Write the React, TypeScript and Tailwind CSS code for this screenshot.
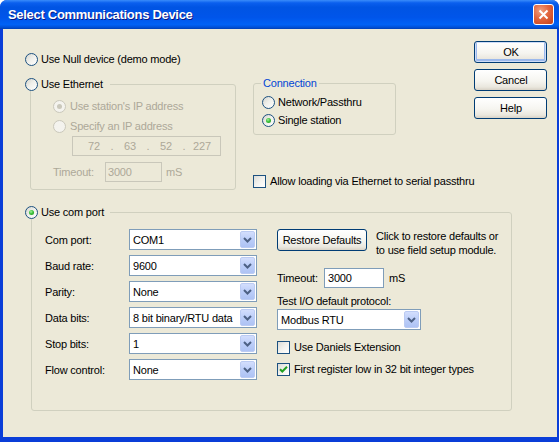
import React from "react";

const Radio = ({ checked = false, disabled = false }: { checked?: boolean; disabled?: boolean }) => (
  <span
    className={`flex h-[13px] w-[13px] shrink-0 items-center justify-center rounded-full border ${
      disabled
        ? "border-[#CAC8BB] bg-[#F4F3EE]"
        : "border-[#1C5180] bg-[linear-gradient(135deg,#D4D4CC_0%,#EFEFEA_45%,#FFFFFF_100%)]"
    }`}
  >
    {checked && (
      <span
        className={`h-[5px] w-[5px] rounded-full ${
          disabled ? "bg-[#CAC8BB]" : "bg-[radial-gradient(circle_at_40%_35%,#A6F0A0_0%,#3CC23A_45%,#1A8A1A_100%)]"
        }`}
      />
    )}
  </span>
);

const Check = ({ checked = false }: { checked?: boolean }) => (
  <span className="flex h-[13px] w-[13px] shrink-0 items-center justify-center border border-[#1C5180] bg-[linear-gradient(135deg,#DCDCD7_0%,#F2F2EE_50%,#FFFFFF_100%)]">
    {checked && (
      <svg width="11" height="11" viewBox="0 0 11 11">
        <path d="M2 5.2 L4.3 7.5 L9 2.8" stroke="#21A121" strokeWidth="2" fill="none" />
      </svg>
    )}
  </span>
);

const Combo = ({ value, w }: { value: string; w: string }) => (
  <div className={`flex h-[21px] shrink-0 items-stretch border border-[#7F9DB9] bg-white ${w}`}>
    <span className="flex min-w-0 flex-1 items-center overflow-hidden whitespace-nowrap pl-[3px]">{value}</span>
    <span className="m-[1px] flex w-[15px] items-center justify-center rounded-[2px] border border-[#BBCBF3] bg-[linear-gradient(180deg,#D3DEFD_0%,#BCCEF9_50%,#AEC3F4_100%)]">
      <svg width="9" height="6" viewBox="0 0 9 6">
        <path d="M1 1 L4.5 4.5 L8 1" stroke="#4D6185" strokeWidth="2" fill="none" />
      </svg>
    </span>
  </div>
);

const Btn = ({ children, w, def = false }: { children: React.ReactNode; w: string; def?: boolean }) => (
  <button
    className={`flex h-[22px] shrink-0 items-center justify-center rounded-[3px] border border-[#003C74] bg-[linear-gradient(180deg,#FFFFFF_0%,#F6F5F0_55%,#EAE7DE_85%,#D8D2C6_100%)] text-black ${w} ${
      def ? "shadow-[inset_0_0_0_1px_#CEDCF7,inset_0_-1px_0_2px_#9CB9EC]" : ""
    }`}
  >
    {children}
  </button>
);

export default function App() {
  return (
    <div className="h-[442px] w-[559px] bg-white font-['Liberation_Sans',Arial,sans-serif] text-[11px] leading-[14px] tracking-[-0.2px] text-black">
      <div className="flex h-full w-full flex-col overflow-hidden rounded-t-[7px] bg-[#0A3ED8]">
        {/* Title bar */}
        <div className="flex h-[29px] shrink-0 items-center justify-between bg-[linear-gradient(180deg,#3A8CFA_0%,#0A5FEE_10%,#0054E3_25%,#0055EA_60%,#0062F6_85%,#0050D8_94%,#0040B4_100%)] pl-[8px] pr-[5px]">
          <span className="text-[13px] font-bold tracking-[-0.3px] text-white [text-shadow:1px_1px_0_#0A1883]">
            Select Communications Device
          </span>
          <span className="flex h-[21px] w-[21px] items-center justify-center rounded-[3px] border border-white bg-[radial-gradient(circle_at_35%_30%,#F0A080_0%,#E2653E_45%,#C2401B_100%)]">
            <svg width="11" height="11" viewBox="0 0 11 11">
              <path d="M1.5 1.5 L9.5 9.5 M9.5 1.5 L1.5 9.5" stroke="white" strokeWidth="2" />
            </svg>
          </span>
        </div>

        {/* Frame */}
        <div className="flex flex-1 pb-[5px] pl-[3px] pr-[4px]">
          <div className="flex flex-1 flex-col bg-[#ECE9D8] pl-[22px] pt-[12px]">
            {/* Top section */}
            <div className="flex items-start">
              {/* Column A */}
              <div className="mt-[11px] flex w-[211px] shrink-0 flex-col">
                <div className="flex h-[14px] items-center gap-[3px]">
                  <Radio />
                  <span>Use Null device (demo mode)</span>
                </div>
                <div className="relative ml-[5px] mt-[18px] h-[106px] w-[206px] rounded-[3px] border border-[#D0D0BF] pl-[22px] pt-[14px] text-[#ACA899]">
                  <div className="absolute -left-[6px] -top-[8px] flex h-[14px] items-center gap-[3px] bg-[#ECE9D8] pr-[7px] text-black">
                    <Radio />
                    <span>Use Ethernet</span>
                  </div>
                  <div className="flex flex-col gap-[6px]">
                    <div className="flex h-[14px] items-center gap-[4px]">
                      <Radio checked disabled />
                      <span>Use station's IP address</span>
                    </div>
                    <div className="flex h-[14px] items-center gap-[4px]">
                      <Radio disabled />
                      <span>Specify an IP address</span>
                    </div>
                  </div>
                  <div className="ml-[19px] mt-[3px] flex h-[20px] w-[149px] items-center border border-[#C9C7BA] pl-[9px]">
                    <span className="w-[24px] text-center">72</span>
                    <span className="w-[12px] text-center">.</span>
                    <span className="w-[24px] text-center">63</span>
                    <span className="w-[12px] text-center">.</span>
                    <span className="w-[24px] text-center">52</span>
                    <span className="w-[12px] text-center">.</span>
                    <span className="w-[24px] text-center">227</span>
                  </div>
                  <div className="mt-[6px] flex h-[20px] items-center">
                    <span className="w-[52px]">Timeout:</span>
                    <span className="flex h-[20px] w-[57px] items-center border border-[#C9C7BA] pl-[2px]">3000</span>
                    <span className="ml-[4px]">mS</span>
                  </div>
                </div>
              </div>

              {/* Column B */}
              <div className="ml-[17px] mt-[42px] flex min-w-0 flex-1 flex-col">
                <div className="relative h-[52px] w-[143px] rounded-[3px] border border-[#D0D0BF] pl-[8px] pt-[11px]">
                  <span className="absolute -top-[8px] left-[7px] h-[14px] bg-[#ECE9D8] px-[2px] text-[#0046D5]">
                    Connection
                  </span>
                  <div className="flex flex-col gap-[4px]">
                    <div className="flex h-[14px] items-center gap-[3px]">
                      <Radio />
                      <span>Network/Passthru</span>
                    </div>
                    <div className="flex h-[14px] items-center gap-[3px]">
                      <Radio checked />
                      <span>Single station</span>
                    </div>
                  </div>
                </div>
                <div className="mt-[39px] flex h-[14px] items-center gap-[4px] whitespace-nowrap">
                  <Check />
                  <span>Allow loading via Ethernet to serial passthru</span>
                </div>
              </div>

              {/* Buttons */}
              <div className="ml-auto mr-[10px] flex w-[73px] shrink-0 flex-col gap-[6px]">
                <Btn w="w-[73px]" def>
                  OK
                </Btn>
                <Btn w="w-[73px]">Cancel</Btn>
                <Btn w="w-[73px]">Help</Btn>
              </div>
            </div>

            {/* Com port group */}
            <div className="relative ml-[6px] mt-[22px] flex h-[199px] w-[481px] gap-[20px] rounded-[3px] border border-[#D0D0BF] pl-[13px] pt-[16px]">
              <div className="absolute -left-[7px] -top-[8px] flex h-[14px] items-center gap-[3px] bg-[#ECE9D8] pr-[6px]">
                <Radio checked />
                <span>Use com port</span>
              </div>

              <div className="flex flex-col gap-[5px]">
                {[
                  ["Com port:", "COM1"],
                  ["Baud rate:", "9600"],
                  ["Parity:", "None"],
                  ["Data bits:", "8 bit binary/RTU data"],
                  ["Stop bits:", "1"],
                  ["Flow control:", "None"],
                ].map(([label, value]) => (
                  <div key={label} className="flex h-[21px] items-center">
                    <span className="w-[84px] shrink-0">{label}</span>
                    <Combo value={value} w="w-[128px]" />
                  </div>
                ))}
              </div>

              <div className="flex flex-col">
                <div className="flex items-start">
                  <Btn w="w-[90px]">Restore Defaults</Btn>
                  <span className="ml-[9px] whitespace-nowrap">
                    Click to restore defaults or
                    <br />
                    to use field setup module.
                  </span>
                </div>
                <div className="mt-[11px] flex h-[20px] items-center">
                  <span className="w-[47px]">Timeout:</span>
                  <span className="flex h-[20px] w-[60px] items-center border border-[#7F9DB9] bg-white pl-[3px]">3000</span>
                  <span className="ml-[5px]">mS</span>
                </div>
                <div className="mt-[6px] flex h-[14px] items-center">Test I/O default protocol:</div>
                <div className="mt-[1px]">
                  <Combo value="Modbus RTU" w="w-[144px]" />
                </div>
                <div className="mt-[10px] flex h-[14px] items-center gap-[4px]">
                  <Check />
                  <span>Use Daniels Extension</span>
                </div>
                <div className="mt-[8px] flex h-[14px] items-center gap-[4px] whitespace-nowrap">
                  <Check checked />
                  <span>First register low in 32 bit integer types</span>
                </div>
              </div>
            </div>
          </div>
        </div>
      </div>
    </div>
  );
}
